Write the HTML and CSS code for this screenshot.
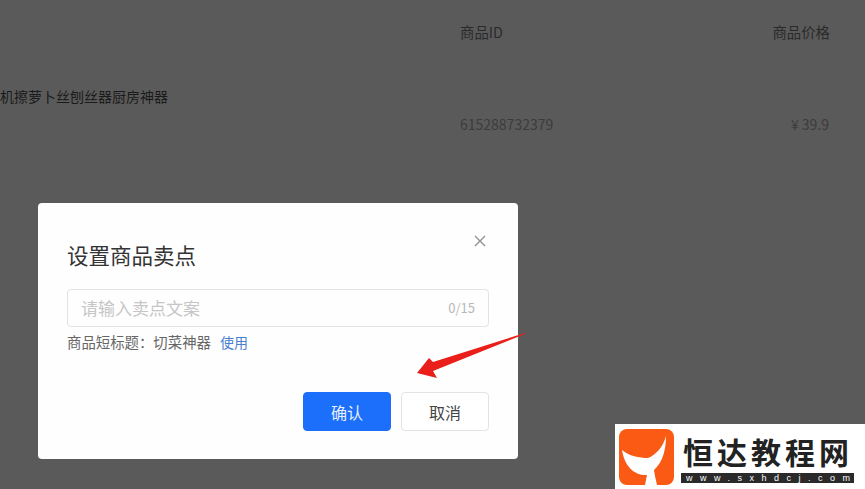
FILE: index.html
```html
<!DOCTYPE html>
<html lang="zh-CN">
<head>
<meta charset="utf-8">
<title>设置商品卖点</title>
<link rel="stylesheet" href="styles.css">
</head>
<body>
<main class="page">
  <div class="table">
    <div class="table-head">
      <span class="col-id">商品ID</span>
      <span class="col-price">商品价格</span>
    </div>
    <div class="table-row">
      <span class="product-name">机擦萝卜丝刨丝器厨房神器</span>
      <span class="col-id value">615288732379</span>
      <span class="col-price value">¥ 39.9</span>
    </div>
  </div>
</main>

<section class="modal">
  <button class="close" type="button" aria-label="关闭">
    <svg viewBox="0 0 12 12" width="12" height="12"><path d="M1 1l10 10M11 1L1 11" fill="none" stroke="#8f8f8f" stroke-width="1.3"/></svg>
  </button>
  <h2 class="modal-title">设置商品卖点</h2>
  <div class="field">
    <span class="placeholder">请输入卖点文案</span>
    <span class="count">0/15</span>
  </div>
  <p class="hint">商品短标题：切菜神器<a class="use">使用</a></p>
  <div class="actions">
    <button class="btn primary" type="button">确认</button>
    <button class="btn" type="button">取消</button>
  </div>
</section>

<svg class="arrow" viewBox="0 0 115 50" width="115" height="50">
  <path d="M112 3 L20 32 L16 28 L4 43 L24 48 L20 41 L112 4 Z" fill="#ea1f1a"/>
</svg>

<aside class="brand">
  <svg class="brand-icon" viewBox="0 0 55 56" width="55" height="56">
    <rect width="55" height="56" rx="8" fill="#fa5a14"/>
    <path d="M47 7 C47 20 44 33 35 41 L36 47 L38 56 L26 56 L28 46 C18 47 6 40 3 21 C10 27 20 29 29 29 C37 26 44 18 47 7 Z" fill="#fff"/>
  </svg>
  <div class="brand-text">
    <strong class="brand-name">恒达教程网</strong>
    <span class="brand-url">www.sxhdcj.com</span>
  </div>
</aside>
</body>
</html>
```
FILE: styles.css
```css
* { box-sizing: border-box; }
html, body { margin: 0; height: 100%; }
body {
  position: relative;
  width: 865px;
  height: 489px;
  overflow: hidden;
  background: #5a5a5a;
  font-family: "Noto Sans CJK SC", "Liberation Sans", sans-serif;
  color: #2b2b2b;
}
.page { height: 100%; }
.table { display: flex; flex-direction: column; font-size: 14px; line-height: 20px; }
.table-head { display: flex; padding: 22px 35px 0 460px; font-size: 14.4px; color: #2a2a2a; }
.table-row { display: flex; padding: 44px 36px 0 0; }
.col-id { flex: 1; }
.col-price { text-align: right; }
.product-name { width: 460px; height: 20px; overflow: hidden; color: #1a1a1a; }
.value { padding-top: 18px; margin-top: 10px; color: #3c3c3c; }

.modal {
  position: absolute;
  left: 38px;
  top: 203px;
  width: 480px;
  height: 256px;
  padding: 35px 29px 0 29px;
  display: flex;
  flex-direction: column;
  background: #fefefe;
  border-radius: 4px;
}
.close {
  position: absolute;
  right: 32px;
  top: 32px;
  width: 12px;
  height: 12px;
  padding: 0;
  border: 0;
  background: none;
  display: flex;
}
.modal-title { margin: 0; font-size: 21.5px; line-height: 34px; font-weight: 400; color: #333; }
.field {
  margin-top: 17px;
  height: 38px;
  padding: 0 13px 1px;
  display: flex;
  align-items: center;
  justify-content: space-between;
  border: 1px solid #e3e3e3;
  border-radius: 4px;
  font-size: 17px;
}
.placeholder { color: #c6c6c6; }
.count { color: #b8b8b8; font-size: 13px; }
.hint { margin: 5px 0 0; font-size: 14.4px; line-height: 20px; color: #666; }
.use { margin-left: 9px; font-size: 14px; color: #4a7fd0; }
.actions { margin-top: 40px; display: flex; justify-content: flex-end; gap: 10px; }
.btn {
  width: 88px;
  height: 39px;
  padding: 0;
  border: 1px solid #e3e3e3;
  border-radius: 4px;
  background: #fff;
  color: #444;
  font: 16px "Noto Sans CJK SC", "Liberation Sans", sans-serif;
}
.btn.primary { background: #1b6ffb; border-color: #1b6ffb; color: #e8f0ff; }

.arrow { position: absolute; left: 413px; top: 330px; }

.brand {
  position: absolute;
  right: 0;
  bottom: 0;
  width: 250px;
  height: 65px;
  padding: 5px 0 0 4px;
  display: flex;
  gap: 7px;
  background: #fff;
}
.brand-icon { flex: none; }
.brand-text { display: flex; flex-direction: column; width: 173px; }
.brand-name { height: 44px; padding-left: 2px; font-size: 30px; line-height: 44px; font-weight: 700; letter-spacing: 4px; color: #222; white-space: nowrap; }
.brand-url {
  height: 10px;
  background: #2a2a2a;
  color: #fff;
  font-size: 9px;
  line-height: 10px;
  letter-spacing: 7.5px;
  padding-left: 5px;
  font-family: "Liberation Sans", sans-serif;
  white-space: nowrap;
}
```
